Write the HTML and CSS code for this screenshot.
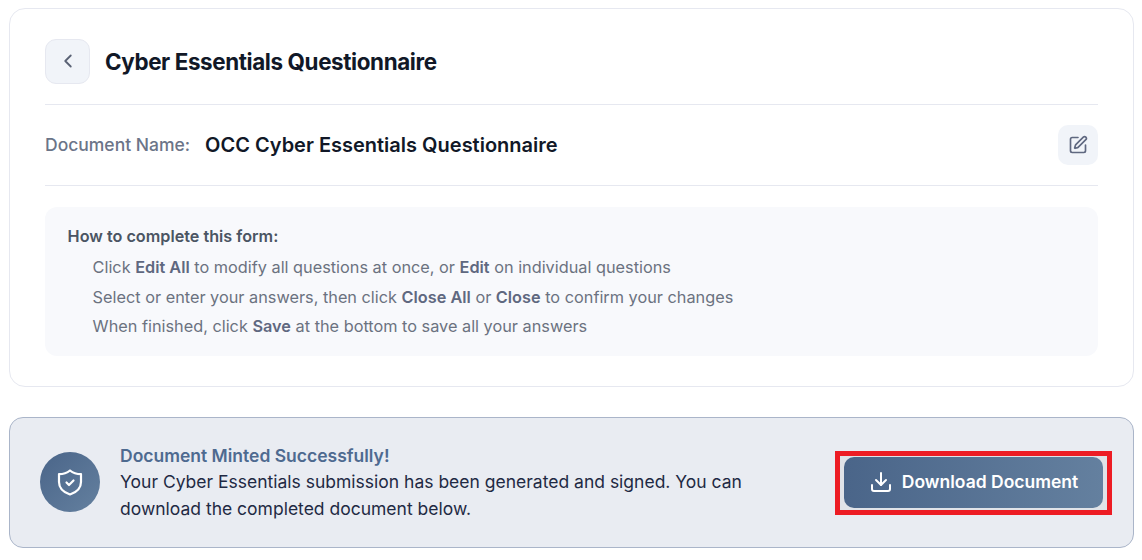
FILE: index.html
```html
<!DOCTYPE html>
<html lang="en">
<head>
<meta charset="utf-8">
<title>Cyber Essentials Questionnaire</title>
<link rel="stylesheet" href="styles.css">
</head>
<body>
<main class="page">
  <section class="card">
    <header class="head">
      <button class="back" type="button" aria-label="Back">
        <svg width="22" height="22" viewBox="0 0 24 24" fill="none" stroke="currentColor" stroke-width="2" stroke-linecap="round" stroke-linejoin="round"><path d="m15 18-6-6 6-6"/></svg>
      </button>
      <h1 class="title">Cyber Essentials Questionnaire</h1>
    </header>
    <div class="docrow">
      <span class="doclabel">Document Name:</span>
      <span class="docname">OCC Cyber Essentials Questionnaire</span>
      <button class="edit" type="button" aria-label="Edit">
        <svg width="20" height="20" viewBox="0 0 24 24" fill="none" stroke="currentColor" stroke-width="2" stroke-linecap="round" stroke-linejoin="round"><path d="M12 3H5a2 2 0 0 0-2 2v14a2 2 0 0 0 2 2h14a2 2 0 0 0 2-2v-7"/><path d="M18.375 2.625a1 1 0 0 1 3 3l-9.013 9.014a2 2 0 0 1-.853.505l-2.873.84a.5.5 0 0 1-.62-.62l.84-2.873a2 2 0 0 1 .506-.852z"/></svg>
      </button>
    </div>
    <div class="help">
      <h2 class="helptitle">How to complete this form:</h2>
      <ul class="helplist">
        <li>Click <b>Edit All</b> to modify all questions at once, or <b>Edit</b> on individual questions</li>
        <li>Select or enter your answers, then click <b>Close All</b> or <b>Close</b> to confirm your changes</li>
        <li>When finished, click <b>Save</b> at the bottom to save all your answers</li>
      </ul>
    </div>
  </section>
  <section class="minted">
    <div class="badge">
      <svg width="26" height="27" viewBox="0 0 26 27" fill="none" stroke="currentColor" stroke-width="2.2" stroke-linecap="round" stroke-linejoin="round"><path d="M13 1.5C16 4 20 5.2 24 5.2V13C24 19.5 19 23.5 13 25.5C7 23.5 2 19.5 2 13V5.2C6 5.2 10 4 13 1.5Z"/><path d="m9.5 13.5 2.5 2.5 4.5-4.5"/></svg>
    </div>
    <div class="mintedtext">
      <h2 class="mintedtitle">Document Minted Successfully!</h2>
      <p class="mintedbody">Your Cyber Essentials submission has been generated and signed. You can download the completed document below.</p>
    </div>
    <div class="highlight">
      <button class="download" type="button">
        <svg width="24" height="24" viewBox="0 0 24 24" fill="none" stroke="currentColor" stroke-width="2" stroke-linecap="round" stroke-linejoin="round"><path d="M12 15V3"/><path d="M21 15v4a2 2 0 0 1-2 2H5a2 2 0 0 1-2-2v-4"/><path d="m7 10 5 5 5-5"/></svg>
        Download Document
      </button>
    </div>
  </section>
</main>
</body>
</html>
```
FILE: styles.css
```css
* { box-sizing: border-box; }
html, body { margin: 0; padding: 0; background: #fff; }
body { font-family: Inter, "Liberation Sans", sans-serif; height: 560px; overflow: hidden; }
.page { padding: 8px 8px 0 9px; display: flex; flex-direction: column; gap: 30px; }
.card {
  height: 379px;
  border: 1px solid #e6e8f0;
  border-radius: 16px;
  padding: 30px 35px 30px 35px;
  background: #fff;
}
.head {
  display: flex;
  align-items: center;
  gap: 15px;
  height: 66px;
  padding-bottom: 21px;
  border-bottom: 1px solid #e6e8f0;
}
.back {
  width: 45px;
  height: 45px;
  border: 1px solid #e6e8f0;
  border-radius: 11px;
  background: #f1f4f9;
  color: #5a6275;
  display: flex;
  align-items: center;
  justify-content: center;
  padding: 0;
}
.title { margin: 2px 0 0; font-size: 22.4px; line-height: 30px; font-weight: 700; color: #111827; letter-spacing: -0.39px; }
.docrow {
  display: flex;
  align-items: center;
  height: 81px;
  border-bottom: 1px solid #e6e8f0;
}
.doclabel { font-size: 17.5px; font-weight: 500; color: #6b7488; margin-right: 15px; margin-bottom: 1px; }
.docname { font-size: 20px; font-weight: 600; color: #111827; flex: 1; }
.edit {
  width: 40px;
  height: 40px;
  border: 0;
  border-radius: 10px;
  background: #f1f4f9;
  color: #5f6880;
  display: flex;
  align-items: center;
  justify-content: center;
  padding: 0;
}
.help {
  margin-top: 21px;
  height: 149px;
  padding: 18px 22.6px;
  border-radius: 12px;
  background: #f8f9fc;
}
.helptitle { margin: 0 0 9px; font-size: 16.2px; line-height: 22px; font-weight: 600; color: #4b5563; }
.helplist { list-style: none; margin: 0; padding: 0 0 0 25px; font-size: 16.3px; line-height: 22px; color: #6b7280; }
.helplist li { margin-bottom: 7.5px; }
.helplist b { font-weight: 600; color: #5f6880; }
.minted {
  height: 131px;
  display: flex;
  align-items: center;
  border: 1px solid #aab5c9;
  border-radius: 14px;
  background: #e9ecf2;
  padding: 0 30px;
}
.badge {
  width: 60px;
  height: 60px;
  flex: none;
  border-radius: 50%;
  background: linear-gradient(135deg, #4a6589, #64809f);
  color: #fff;
  display: flex;
  align-items: center;
  justify-content: center;
  margin-right: 20px;
  margin-top: -1px;
}
.mintedtext { width: 660px; }
.mintedtitle { margin: 0; font-size: 17.5px; line-height: 25px; font-weight: 600; color: #4e6a90; }
.mintedbody { margin: 0; font-size: 17.5px; line-height: 27px; color: #1f2a44; }
.highlight {
  margin-left: auto;
  margin-right: -9px;
  margin-top: 1px;
  border: 5px solid #ed1c24;
  padding: 1px 4px 2px 4px;
  background: #e0e3e8;
  width: 277px;
  height: 64px;
  display: flex;
}
.download {
  flex: 1;
  border: 0;
  border-radius: 10px;
  background: linear-gradient(90deg, #4a6589, #64809f);
  color: #fff;
  font-family: inherit;
  font-size: 17.5px;
  font-weight: 600;
  display: flex;
  align-items: center;
  justify-content: center;
  gap: 9px;
  padding: 0 0 2px;
}
```
